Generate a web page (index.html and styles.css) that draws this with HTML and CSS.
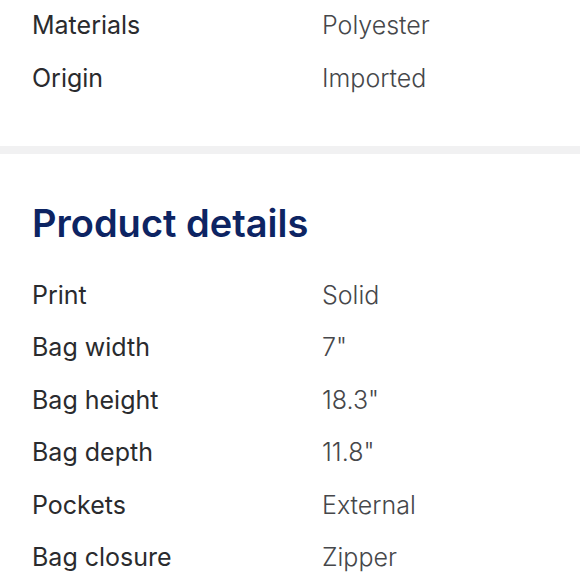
FILE: index.html
```html
<!DOCTYPE html>
<html lang="en">
<head>
<meta charset="utf-8">
<link rel="stylesheet" href="styles.css">
</head>
<body>
  <section class="specs">
    <dl class="spec-list">
      <div class="spec-row"><dt>Materials</dt><dd>Polyester</dd></div>
      <div class="spec-row"><dt>Origin</dt><dd>Imported</dd></div>
    </dl>
  </section>
  <div class="divider"></div>
  <section class="details">
    <h2 class="details-title">Product details</h2>
    <dl class="spec-list">
      <div class="spec-row"><dt>Print</dt><dd>Solid</dd></div>
      <div class="spec-row"><dt>Bag width</dt><dd>7"</dd></div>
      <div class="spec-row"><dt>Bag height</dt><dd>18.3"</dd></div>
      <div class="spec-row"><dt>Bag depth</dt><dd>11.8"</dd></div>
      <div class="spec-row"><dt>Pockets</dt><dd>External</dd></div>
      <div class="spec-row"><dt>Bag closure</dt><dd>Zipper</dd></div>
    </dl>
  </section>
</body>
</html>
```
FILE: styles.css
```css
html, body {
  margin: 0;
  padding: 0;
  background: #ffffff;
}
body {
  font-family: Inter, "Noto Sans", sans-serif;
  width: 580px;
  overflow: hidden;
}
.specs {
  padding: 9px 32px 0;
}
.spec-list {
  margin: 0;
  display: flex;
  flex-direction: column;
  gap: 20.5px;
}
.spec-row {
  display: grid;
  grid-template-columns: 290px 1fr;
  font-size: 25px;
  line-height: 32px;
}
.spec-row dt {
  font-weight: 400;
  color: #2a2b2e;
}
.spec-row dd {
  margin: 0;
  font-weight: 300;
  color: #46474a;
}
.divider {
  margin-top: 52px;
  height: 8px;
  background: #f1f1f2;
}
.details {
  padding: 45px 32px 0;
}
.details-title {
  margin: 0 0 32px;
  font-size: 38px;
  line-height: 48px;
  font-weight: 600;
  color: #0d2463;
}
```
